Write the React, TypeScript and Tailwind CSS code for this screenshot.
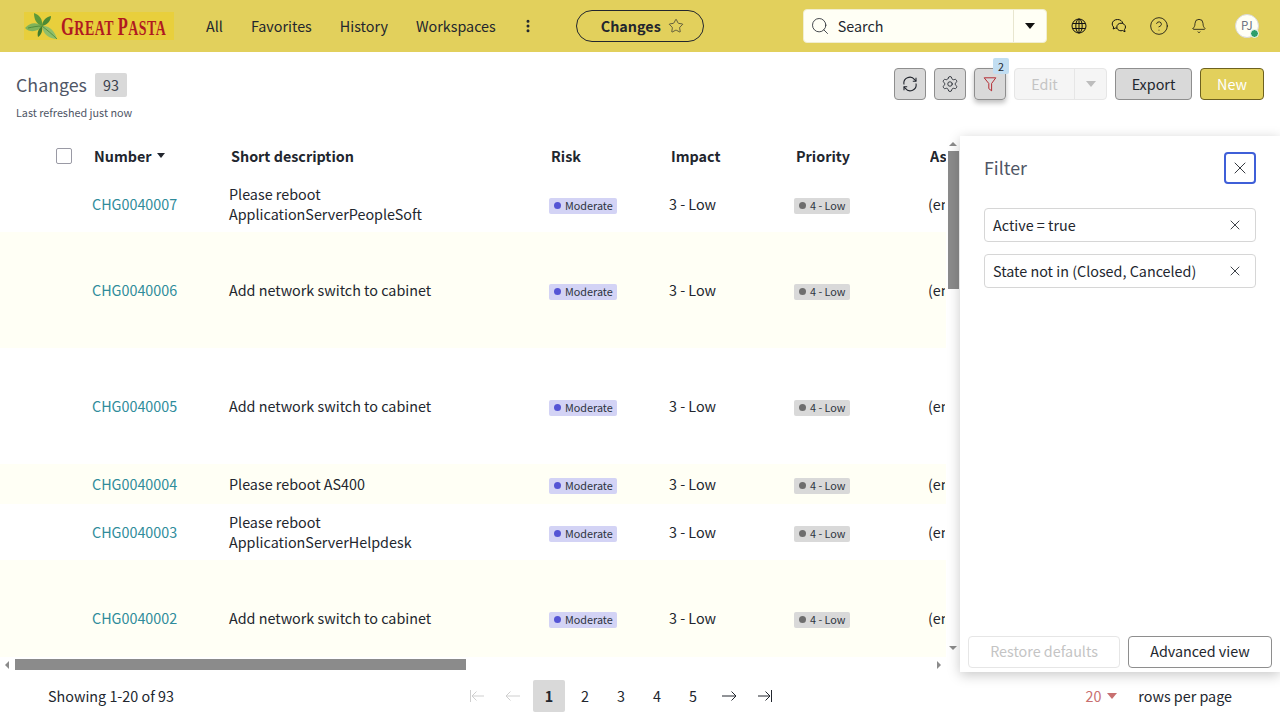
import { Settings, X, Search, CircleHelp, Bell, Star, EllipsisVertical } from "lucide-react";

const rows = [
  { id: "CHG0040007", desc: ["Please reboot", "ApplicationServerPeopleSoft"], h: "h-[56px]", alt: false },
  { id: "CHG0040006", desc: ["Add network switch to cabinet"], h: "h-[116px]", alt: true },
  { id: "CHG0040005", desc: ["Add network switch to cabinet"], h: "h-[116px]", alt: false },
  { id: "CHG0040004", desc: ["Please reboot AS400"], h: "h-[40px]", alt: true },
  { id: "CHG0040003", desc: ["Please reboot", "ApplicationServerHelpdesk"], h: "h-[56px]", alt: false },
  { id: "CHG0040002", desc: ["Add network switch to cabinet"], h: "h-[116px]", alt: true },
];

function Logo() {
  return (
    <div className="flex h-[28px] w-[150px] shrink-0 items-center overflow-hidden bg-[#e8cf3c]">
      <svg width="34" height="28" viewBox="0 0 34 28" className="shrink-0">
        <path d="M1 16C6 10 13 10 18 14C14 20 6 21 1 16Z" fill="#7fb35a" />
        <path d="M4 16C9 15 13 14 18 14" stroke="#3f7d2e" strokeWidth="0.7" fill="none" />
        <path d="M10 1C16 3 19 8 18 14C12 12 10 7 10 1Z" fill="#5d9a3a" />
        <path d="M27 4C27 9 23 13 18 14C18 9 22 5 27 4Z" fill="#4c8a34" />
        <path d="M18 14C25 13 31 19 33 27C25 27 19 22 18 14Z" fill="#8fbe6a" />
        <path d="M18 14C23 18 28 22 33 27" stroke="#3f7d2e" strokeWidth="0.7" fill="none" />
        <path d="M18 14C14 17 13 21 14 25C17 23 19 19 18 14Z" fill="#3f7d2e" />
      </svg>
      <span className="ml-[3px] inline-block origin-left scale-x-[0.66] font-['Liberation_Serif',serif] text-[21px] leading-none font-bold tracking-[0.8px] whitespace-nowrap text-[#b01a21]">
        <span className="text-[25px]">G</span>REAT <span className="text-[25px]">P</span>ASTA
      </span>
    </div>
  );
}

function Tag({ color, dot, label }: { color: string; dot: string; label: string }) {
  return (
    <span className={`relative top-[2px] flex h-4 w-fit items-center gap-[4px] rounded-[2px] pr-[4.5px] pb-[1px] pl-[5px] text-[10.8px] leading-none text-[#2e3440] ${color}`}>
      <span className={`size-[7px] rounded-full ${dot}`} />
      {label}
    </span>
  );
}

function IconButton({ children }: { children: React.ReactNode }) {
  return (
    <button className="flex h-8 w-8 items-center justify-center rounded-[4px] border border-[#8e8e8e] bg-[#d9d9d9] text-[#22262e]">
      {children}
    </button>
  );
}

function SyncIcon() {
  return (
    <svg width="16" height="16" viewBox="0 0 16 16" fill="none" stroke="currentColor" strokeWidth="1.1">
      <path d="M2 8.5A6 6 0 0 1 12.6 3.6L14 5" />
      <path d="M14 1.8V5.2H10.8" />
      <path d="M14 7.5A6 6 0 0 1 3.4 12.4L2 11" />
      <path d="M2 14.2V10.8H5.2" />
    </svg>
  );
}

function FunnelIcon() {
  return (
    <svg width="16" height="16" viewBox="0 0 16 16" fill="none" stroke="#b01a21" strokeWidth="0.9" strokeLinejoin="round">
      <path d="M2.2 1.8H13.8L9.6 7.5V14.8L6.8 12.6V7.5Z" />
    </svg>
  );
}

function GlobeIcon() {
  return (
    <svg width="16" height="16" viewBox="0 0 16 16" fill="none" stroke="#111" strokeWidth="1">
      <circle cx="8" cy="8" r="7" />
      <ellipse cx="8" cy="8" rx="3.2" ry="7" />
      <path d="M8 1V15M1.6 5.5H14.4M1.6 10.5H14.4" />
    </svg>
  );
}

function ChatIcon() {
  return (
    <svg width="16" height="16" viewBox="0 0 16 16" fill="none" stroke="#111" strokeWidth="1">
      <path d="M6.5 1.5C3.5 1.5 1.2 3.4 1.2 6C1.2 7.2 1.7 8.2 2.6 9L2.2 11L4.4 10C5 10.2 5.6 10.3 6.2 10.3" />
      <path d="M6.5 1.5C9.2 1.5 11.3 3 11.7 5.2" />
      <path d="M10 5.2C7.6 5.2 5.8 6.9 5.8 9C5.8 11.1 7.6 12.8 10 12.8C10.6 12.8 11.1 12.7 11.6 12.5L14 13.8L13.5 11.4C14.1 10.7 14.5 9.9 14.5 9C14.5 6.9 12.4 5.2 10 5.2Z" />
    </svg>
  );
}

// pagination arrows, thin with a small head; the bar marks first / last page
function PageArrow({ dir, bar, color }: { dir: "left" | "right"; bar?: boolean; color: string }) {
  return (
    <svg width="16" height="16" viewBox="0 0 16 16" fill="none" stroke={color} strokeWidth="1">
      {dir === "right" ? (
        <>
          <path d={bar ? "M1 8H13M8.5 3.5L13 8L8.5 12.5" : "M1 8H15M10.5 3.5L15 8L10.5 12.5"} />
          {bar && <path d="M14.5 2V14" />}
        </>
      ) : (
        <>
          <path d={bar ? "M15 8H3M7.5 3.5L3 8L7.5 12.5" : "M15 8H1M5.5 3.5L1 8L5.5 12.5"} />
          {bar && <path d="M1.5 2V14" />}
        </>
      )}
    </svg>
  );
}

function PageCell({ children, active }: { children: React.ReactNode; active?: boolean }) {
  return (
    <div className={`flex h-8 w-8 items-center justify-center rounded-[2px] ${active ? "bg-[#d9d9d9] font-bold" : ""}`}>
      {children}
    </div>
  );
}

export default function App() {
  return (
    <div className="flex h-[718px] w-[1280px] flex-col overflow-hidden bg-white font-['Noto_Sans_CJK_SC','Noto_Sans',sans-serif] text-[14.35px] text-[#22262e]">
      <header className="flex h-[52px] shrink-0 items-center bg-[#e2d05c] pl-6">
        <Logo />
        <nav className="ml-[32px] flex items-center gap-[28px]">
          <span>All</span>
          <span>Favorites</span>
          <span>History</span>
          <span>Workspaces</span>
        </nav>
        <EllipsisVertical size={16} strokeWidth={2.5} className="ml-[24px]" />
        <button className="ml-[40px] flex h-8 w-[128px] shrink-0 items-center justify-center gap-[7px] rounded-full border border-[#22262e] pl-[5px] font-bold">
          Changes <Star size={16} strokeWidth={1} />
        </button>
        <div className="ml-[99px] flex h-[34px] w-[244px] shrink-0 items-center rounded-[4px] border border-[#f1eecf] bg-[#fffff5]">
          <Search size={20} strokeWidth={1} className="ml-[6px]" />
          <span className="ml-[8px] flex-1">Search</span>
          <div className="flex h-full w-[33px] items-center justify-center border-l border-[#e8e6cf]">
            <span className="h-0 w-0 border-x-[5px] border-t-[6px] border-x-transparent border-t-[#111]" />
          </div>
        </div>
        <div className="ml-[24px] flex items-center gap-[24px]">
          <GlobeIcon />
          <ChatIcon />
          <CircleHelp size={20} strokeWidth={1} color="#111" className="-mx-[2px]" />
          <Bell size={16} strokeWidth={1.2} color="#111" />
        </div>
        <div className="relative ml-[28px] flex size-6 items-center justify-center rounded-full border border-[#d8d8d8] bg-[#fffff5] text-[11.5px] text-[#6b7280]">
          PJ
          <span className="absolute -right-[1px] -bottom-[1px] size-[9px] rounded-full border border-white bg-[#2e9e6b]" />
        </div>
      </header>

      <div className="flex h-[84px] shrink-0 items-start justify-between pt-4 pr-4 pl-4">
        <div>
          <div className="flex items-center gap-[8px]">
            <h1 className="pb-[2px] text-[17.8px] leading-[32px] text-[#4f5666]">Changes</h1>
            <span className="flex h-6 w-8 items-center justify-center rounded-[2px] bg-[#d9d9d9] text-[#3a404c]">93</span>
          </div>
          <p className="mt-[2px] text-[10.8px] leading-[16px] text-[#4f5666]">Last refreshed just now</p>
        </div>
        <div className="flex items-center gap-2">
          <IconButton><SyncIcon /></IconButton>
          <IconButton><Settings size={18} strokeWidth={1.15} /></IconButton>
          <div className="relative rounded-[4px] shadow-[0_3px_5px_rgba(0,0,0,0.25)]">
            <IconButton><FunnelIcon /></IconButton>
            <span className="absolute -top-[10px] -right-[3px] flex h-4 w-4 items-center justify-center rounded-[2px] bg-[#c2def2] text-[10.8px] leading-none">2</span>
          </div>
          <div className="flex h-8 w-[93px] rounded-[4px] border border-[#e6e6e6] bg-[#f5f5f5] text-[#c4c4c4]">
            <span className="flex w-[60px] items-center justify-center border-r border-[#e6e6e6]">Edit</span>
            <span className="flex flex-1 items-center justify-center">
              <span className="h-0 w-0 border-x-[5px] border-t-[6px] border-x-transparent border-t-[#bdbdbd]" />
            </span>
          </div>
          <button className="h-8 w-[77px] rounded-[4px] border border-[#8e8e8e] bg-[#d9d9d9]">Export</button>
          <button className="h-8 w-[64px] rounded-[4px] border border-[#6d6120] bg-[#e2d05c] text-white">New</button>
        </div>
      </div>

      <div className="flex h-[536px] shrink-0">
        <div className="flex w-[960px] shrink-0 flex-col">
          <div className="flex h-[521px] shrink-0">
            <div className="w-[946px] shrink-0 overflow-hidden">
              <div className="flex h-[40px] items-center font-bold">
                <div className="w-[94px] shrink-0 pl-[56px]">
                  <span className="block size-4 rounded-[2px] border border-[#9a9aa5]" />
                </div>
                <div className="flex w-[137px] shrink-0 items-center gap-[5px]">
                  Number
                  <span className="h-0 w-0 border-x-[4.5px] border-t-[5px] border-x-transparent border-t-[#22262e]" />
                </div>
                <div className="w-[320px] shrink-0">Short description</div>
                <div className="w-[120px] shrink-0">Risk</div>
                <div className="w-[125px] shrink-0">Impact</div>
                <div className="w-[134px] shrink-0">Priority</div>
                <div className="w-[16px] shrink-0 overflow-hidden whitespace-nowrap">Assigned</div>
              </div>
              {rows.map((row) => (
                <div key={row.id} className={`flex items-center ${row.h} shrink-0 ${row.alt ? "bg-[#fffff5]" : "bg-white"}`}>
                  <div className="w-[92px] shrink-0" />
                  <div className="w-[137px] shrink-0 text-[#2f8c9b]">{row.id}</div>
                  <div className="w-[320px] shrink-0 leading-[20px]">
                    {row.desc.map((line) => (
                      <div key={line}>{line}</div>
                    ))}
                  </div>
                  <div className="w-[120px] shrink-0"><Tag color="bg-[#d3d3f5]" dot="bg-[#5555d5]" label="Moderate" /></div>
                  <div className="w-[125px] shrink-0">3 - Low</div>
                  <div className="w-[134px] shrink-0"><Tag color="bg-[#d9d9d9]" dot="bg-[#6e6e6e]" label="4 - Low" /></div>
                  <div className="w-[17px] shrink-0 overflow-hidden whitespace-nowrap">(empty)</div>
                </div>
              ))}
            </div>
            <div className="flex w-[14px] shrink-0 flex-col items-center pr-[1px] pl-[1px]">
              <span className="mt-[6px] h-0 w-0 shrink-0 border-x-[4px] border-b-[4px] border-x-transparent border-b-[#8b8b8b]" />
              <div className="mt-[5px] h-[138px] w-[11px] shrink-0 bg-[#8b8b8b]" />
              <span className="mt-auto mb-[7px] h-0 w-0 shrink-0 border-x-[4px] border-t-[4px] border-x-transparent border-t-[#8b8b8b]" />
            </div>
          </div>
          <div className="flex h-[15px] w-[946px] shrink-0 items-center pt-[2px] pb-[2px]">
            <span className="ml-[5px] h-0 w-0 shrink-0 border-y-[4px] border-r-[4px] border-y-transparent border-r-[#8b8b8b]" />
            <div className="ml-[6px] h-[11px] w-[451px] shrink-0 bg-[#8b8b8b]" />
            <span className="mr-[5px] ml-auto h-0 w-0 shrink-0 border-y-[4px] border-l-[4px] border-y-transparent border-l-[#8b8b8b]" />
          </div>
        </div>

        <aside className="relative z-10 flex w-[320px] shrink-0 flex-col bg-white px-2 pb-1 shadow-[0_3px_12px_rgba(0,0,0,0.22)]">
          <div className="mt-4 flex items-center justify-between px-4">
            <h2 className="text-[17.8px] leading-[28px] pb-[2px] text-[#4f5666]">Filter</h2>
            <button className="flex h-8 w-8 items-center justify-center rounded-[4px] border-2 border-[#3f5fd8]">
              <X size={20} strokeWidth={1.1} />
            </button>
          </div>
          <div className="mt-6 flex flex-col gap-3 px-4">
            <div className="flex h-[34px] items-center justify-between rounded-[4px] border border-[#d6d6d6] pr-[12px] pl-2">
              Active = true <X size={16} strokeWidth={1.3} />
            </div>
            <div className="flex h-[34px] items-center justify-between rounded-[4px] border border-[#d6d6d6] pr-[12px] pl-2">
              State not in (Closed, Canceled) <X size={16} strokeWidth={1.3} />
            </div>
          </div>
          <div className="mt-auto flex gap-2">
            <button className="h-8 w-[152px] rounded-[4px] border border-[#e6e6e6] pb-[2px] text-[#c4c4c4]">Restore defaults</button>
            <button className="h-8 w-[144px] rounded-[4px] border border-[#8e8e8e] pb-[2px]">Advanced view</button>
          </div>
        </aside>
      </div>

      <footer className="flex h-[46px] shrink-0 items-center pt-[2px] pr-12 pl-12">
        <div className="w-[413px] shrink-0">Showing 1-20 of 93</div>
        <div className="flex gap-1">
          <PageCell><PageArrow dir="left" bar color="#cfcfcf" /></PageCell>
          <PageCell><PageArrow dir="left" color="#cfcfcf" /></PageCell>
          <PageCell active>1</PageCell>
          <PageCell>2</PageCell>
          <PageCell>3</PageCell>
          <PageCell>4</PageCell>
          <PageCell>5</PageCell>
          <PageCell><PageArrow dir="right" color="#22262e" /></PageCell>
          <PageCell><PageArrow dir="right" bar color="#22262e" /></PageCell>
        </div>
        <div className="ml-auto flex items-center">
          <span className="text-[#c87070]">20</span>
          <span className="ml-[6px] h-0 w-0 border-x-[5px] border-t-[6px] border-x-transparent border-t-[#c87070]" />
          <span className="ml-[21px]">rows per page</span>
        </div>
      </footer>
    </div>
  );
}
